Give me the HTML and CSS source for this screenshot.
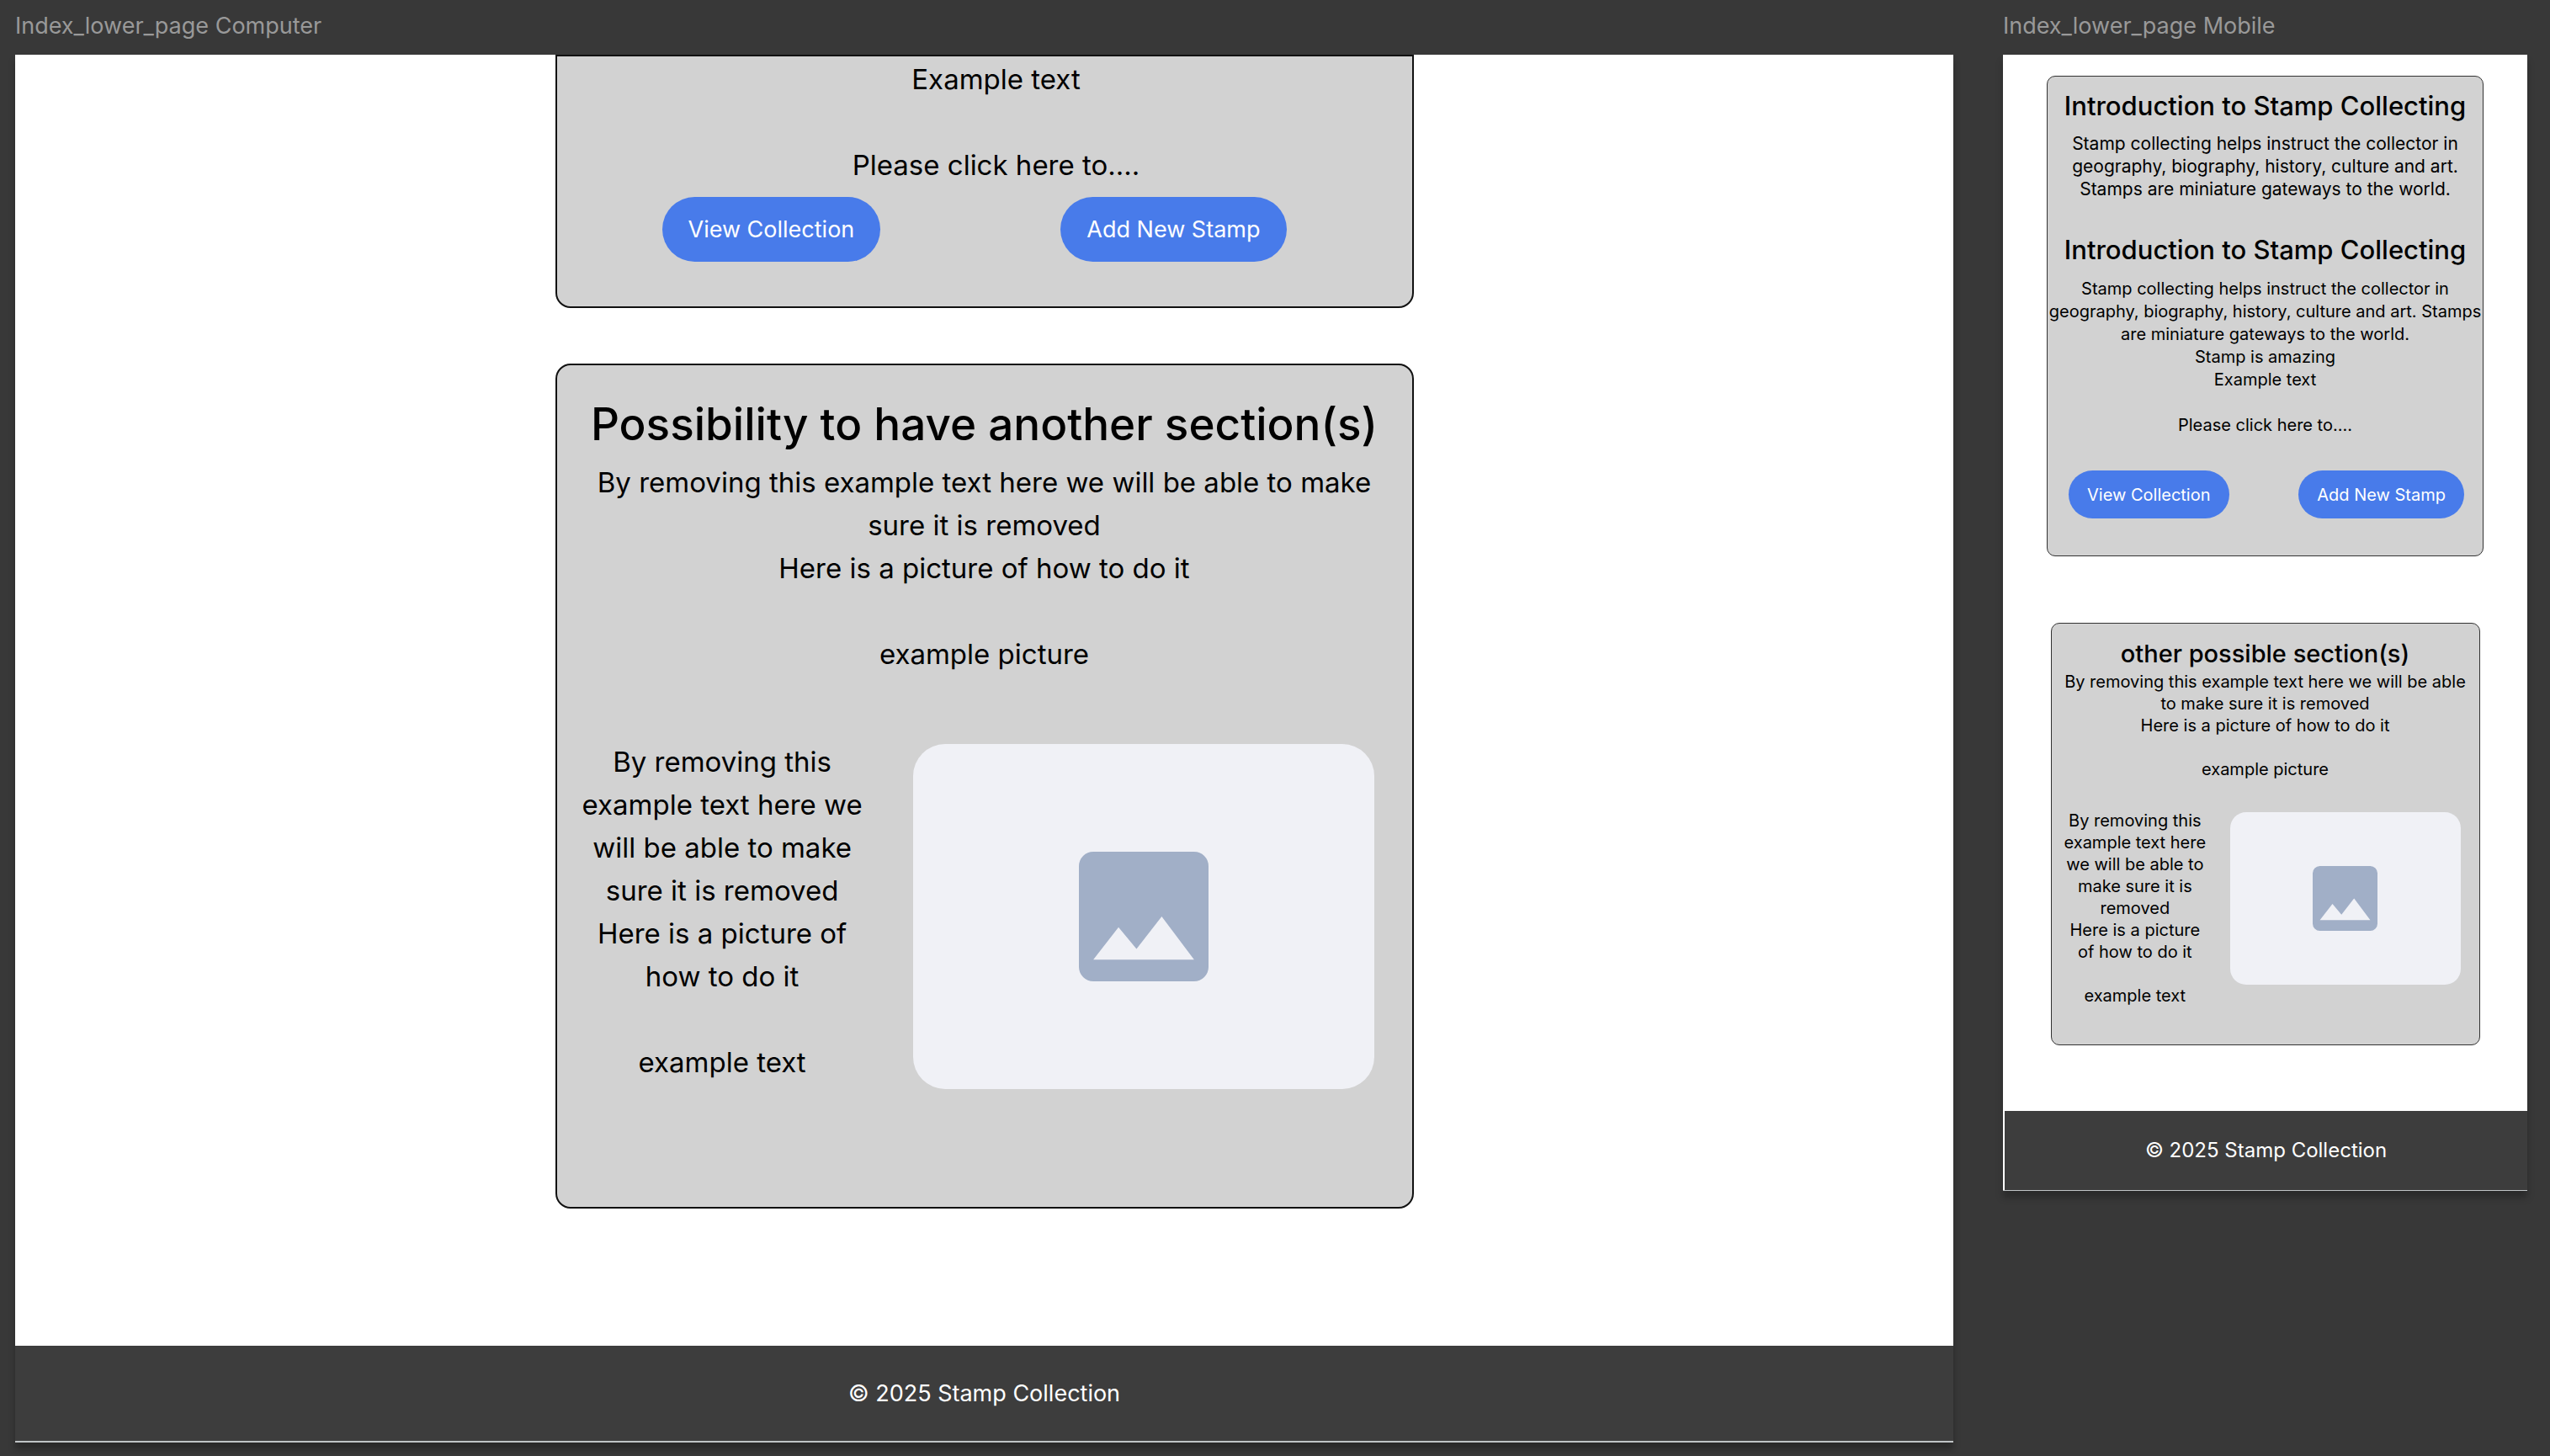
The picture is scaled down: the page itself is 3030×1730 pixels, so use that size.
FILE: index.html
```html
<!DOCTYPE html>
<html lang="en">
<head>
<meta charset="utf-8">
<title>Index lower page</title>
<link rel="stylesheet" href="styles.css">
</head>
<body>
<main class="canvas">
  <section class="board desktop">
    <h2 class="board-name">Index_lower_page Computer</h2>
    <div class="frame">
      <div class="page">
        <article class="card card-intro">
          <p class="copy">Example text<br><br>Please click here to....</p>
          <div class="actions">
            <button class="btn" type="button">View Collection</button>
            <button class="btn" type="button">Add New Stamp</button>
          </div>
        </article>
        <article class="card card-extra">
          <h3 class="title">Possibility to have another section(s)</h3>
          <p class="copy">By removing this example text here we will be able to make<br>sure it is removed<br>Here is a picture of how to do it<br><br>example picture</p>
          <div class="media">
            <p class="copy">By removing this<br>example text here we<br>will be able to make<br>sure it is removed<br>Here is a picture of<br>how to do it<br><br>example text</p>
            <div class="placeholder">
              <svg class="picture" viewBox="0 0 18 18" role="img" aria-label="Picture placeholder"><path fill-rule="evenodd" d="M2 0H16A2 2 0 0 1 18 2V16A2 2 0 0 1 16 18H2A2 2 0 0 1 0 16V2A2 2 0 0 1 2 0ZM5.5 10.5L2 15H16L11.500 9L8 13.510Z"/></svg>
            </div>
          </div>
        </article>
      </div>
      <footer class="footer">© 2025 Stamp Collection</footer>
    </div>
  </section>

  <section class="board mobile">
    <h2 class="board-name">Index_lower_page Mobile</h2>
    <div class="frame">
      <div class="page">
        <article class="card card-intro">
          <h3 class="title">Introduction to Stamp Collecting</h3>
          <p class="copy lead">Stamp collecting helps instruct the collector in<br>geography, biography, history, culture and art.<br>Stamps are miniature gateways to the world.</p>
          <h3 class="title title-second">Introduction to Stamp Collecting</h3>
          <p class="copy">Stamp collecting helps instruct the collector in<br>geography, biography, history, culture and art. Stamps<br>are miniature gateways to the world.<br>Stamp is amazing<br>Example text<br><br>Please click here to....</p>
          <div class="actions">
            <button class="btn" type="button">View Collection</button>
            <button class="btn" type="button">Add New Stamp</button>
          </div>
        </article>
        <article class="card card-extra">
          <h3 class="title">other possible section(s)</h3>
          <p class="copy">By removing this example text here we will be able<br>to make sure it is removed<br>Here is a picture of how to do it<br><br>example picture</p>
          <div class="media">
            <p class="copy">By removing this<br>example text here<br>we will be able to<br>make sure it is<br>removed<br>Here is a picture<br>of how to do it<br><br>example text</p>
            <div class="placeholder">
              <svg class="picture" viewBox="0 0 18 18" role="img" aria-label="Picture placeholder"><path fill-rule="evenodd" d="M2 0H16A2 2 0 0 1 18 2V16A2 2 0 0 1 16 18H2A2 2 0 0 1 0 16V2A2 2 0 0 1 2 0ZM5.5 10.5L2 15H16L11.500 9L8 13.510Z"/></svg>
            </div>
          </div>
        </article>
      </div>
      <footer class="footer">© 2025 Stamp Collection</footer>
    </div>
  </section>
</main>
</body>
</html>
```
FILE: styles.css
```css
* {
  box-sizing: border-box;
}

body {
  margin: 0;
  background: #383838;
  color: #000;
  font-family: Inter, "Liberation Sans", sans-serif;
}

h2, h3, p {
  margin: 0;
}

.canvas {
  display: grid;
  grid-template-columns: 2303fr 623fr;
  gap: 59px;
  align-items: start;
  padding: 0 27px 14px 18px;
}

.board-name {
  height: 65px;
  padding-top: 14px;
  color: #999;
  font-size: 27px;
  line-height: 34px;
  font-weight: 400;
  white-space: nowrap;
}

.frame {
  background: #fff;
  border-bottom: 2px solid #c0c4c6;
  box-shadow: 0 8px 8px rgba(0, 0, 0, 0.25);
}

.page {
  display: flex;
  flex-direction: column;
  align-items: center;
}

.card {
  width: 100%;
  background: #d2d2d2;
  border: 2px solid #111;
  border-radius: 18px;
}

.title {
  font-weight: 500;
  text-align: center;
  white-space: nowrap;
}

.copy {
  text-align: center;
  white-space: nowrap;
}

.actions {
  display: flex;
  justify-content: space-between;
}

.btn {
  border: 0;
  border-radius: 40px;
  background: #487bea;
  color: #fff;
  font-family: inherit;
  white-space: nowrap;
}

.media {
  display: flex;
  justify-content: space-between;
  align-items: flex-start;
}

.placeholder {
  display: flex;
  align-items: center;
  justify-content: center;
  background: #f0f1f6;
}

.picture {
  display: block;
  fill: #a1afc7;
}

.footer {
  background: #3d3d3d;
  color: #fff;
  text-align: center;
}

/* Computer board */

.desktop .page {
  gap: 66px;
  padding-bottom: 163px;
}

.desktop .card {
  max-width: 1020px;
}

.desktop .card-intro {
  padding: 2px 0 53px;
  border-radius: 0 0 18px 18px;
}

.desktop .card-intro .copy {
  padding-left: 28px;
}

.desktop .copy {
  font-size: 33px;
  line-height: 51px;
}

.desktop .actions {
  margin-top: 12px;
  padding: 0 149px 0 125px;
}

.desktop .btn {
  height: 77px;
  padding: 0 31px;
  font-size: 27px;
}

.desktop .card-extra {
  padding: 34px 0 140px;
}

.desktop .title {
  margin-bottom: 8px;
  font-size: 53px;
  line-height: 72px;
}

.desktop .media {
  margin-top: 77px;
  padding: 0 45px 0 30px;
}

.desktop .placeholder {
  width: 548px;
  height: 410px;
  margin-top: 4px;
  border-radius: 38px;
}

.desktop .picture {
  width: 154px;
}

.desktop .footer {
  font-size: 27px;
  line-height: 113px;
}

/* Mobile board */

.mobile .frame {
  border-bottom-width: 1px;
}

.mobile .page {
  gap: 79px;
  padding: 25px 0 78px;
}

.mobile .card {
  border: 1px solid #333;
  border-radius: 10px;
}

.mobile .card-intro {
  max-width: 519px;
  padding: 17px 0 44px;
}

.mobile .card-extra {
  max-width: 510px;
  padding: 18px 0 45px;
}

.mobile .title {
  font-size: 31px;
  line-height: 36px;
}

.mobile .title-second {
  margin-top: 41px;
}

.mobile .copy {
  margin-top: 15px;
  font-size: 20px;
  line-height: 27px;
}

.mobile .lead {
  margin-top: 13px;
  font-size: 21px;
}

.mobile .actions {
  margin-top: 40px;
  padding: 0 22px 0 25px;
}

.mobile .btn {
  height: 57px;
  padding: 0 22px;
  font-size: 20px;
}

.mobile .card-extra .title {
  font-size: 29px;
}

.mobile .card-extra .copy {
  margin-top: 2px;
  line-height: 26px;
}

.mobile .media {
  margin-top: 33px;
  padding: 0 22px 0 15px;
}

.mobile .placeholder {
  width: 274px;
  height: 205px;
  margin-top: 5px;
  border-radius: 19px;
}

.mobile .picture {
  width: 77px;
}

.mobile .footer {
  margin-left: 2px;
  font-size: 24px;
  line-height: 94px;
}
```
